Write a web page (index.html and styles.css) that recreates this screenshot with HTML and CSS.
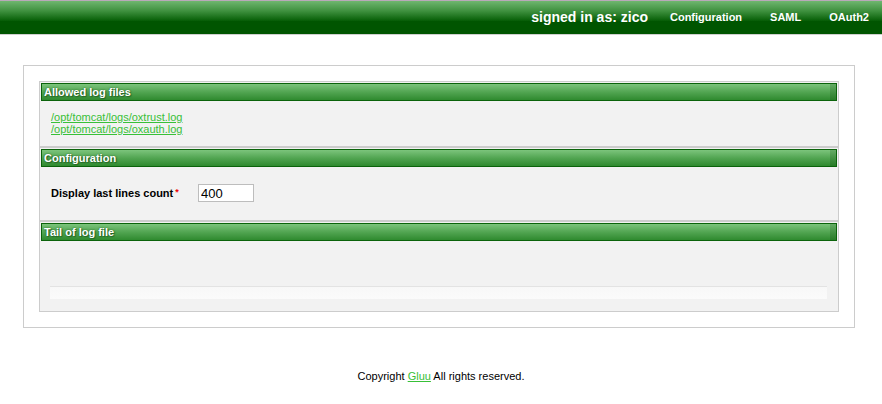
FILE: index.html
```html
<!DOCTYPE html>
<html>
<head>
<meta charset="utf-8">
<title>Log viewer</title>
<link rel="stylesheet" href="styles.css">
</head>
<body>
<header class="topbar">
  <span class="signed">signed in as: zico</span>
  <nav class="menu">
    <a href="#">Configuration</a>
    <a href="#">SAML</a>
    <a href="#">OAuth2</a>
  </nav>
</header>
<main class="outer">
  <div class="panel">
    <section class="section">
      <h2 class="section-head">Allowed log files</h2>
      <div class="section-body files">
        <a href="#">/opt/tomcat/logs/oxtrust.log</a>
        <a href="#">/opt/tomcat/logs/oxauth.log</a>
      </div>
    </section>
    <section class="section sep">
      <h2 class="section-head">Configuration</h2>
      <div class="section-body config">
        <label class="field-label">Display last lines count<span class="req">*</span></label>
        <input class="field-input" type="text" value="400">
      </div>
    </section>
    <section class="section sep">
      <h2 class="section-head">Tail of log file</h2>
      <div class="section-body tail">
        <div class="tail-bar"></div>
      </div>
    </section>
  </div>
</main>
<footer class="footer">Copyright <a href="#">Gluu</a> All rights reserved.</footer>
</body>
</html>
```
FILE: styles.css
```css
html, body {
  margin: 0;
  padding: 0;
  background: #fff;
  font-family: "Liberation Sans", Arial, sans-serif;
  color: #000;
}

.topbar {
  border-top: 1px solid #b9a9b9;
  border-bottom: 1px solid #cfcfcf;
  box-sizing: border-box;
  height: 35px;
  background: linear-gradient(#6fb66f 0%, #3f913f 30%, #0a620a 58%, #005500 62%, #005500 100%);
  display: flex;
  align-items: center;
  justify-content: flex-end;
  padding: 0 13px 1px 0;
  color: #fff;
}
.signed {
  font-size: 14px;
  font-weight: bold;
  margin-right: 22px;
}
.menu {
  display: flex;
  gap: 28px;
}
.menu a {
  color: #fff;
  text-decoration: none;
  font-size: 11px;
  font-weight: bold;
}

.outer {
  margin: 30px 27px 0 23px;
  border: 1px solid #cccccc;
  padding: 15px;
}
.panel {
  border: 1px solid #cccccc;
  background: #f2f2f2;
}
.section {
  padding-top: 1px;
}
.section.sep {
  border-top: 2px solid #cccccc;
}
.section-head {
  margin: 0 1px 0 1px;
  height: 18px;
  box-sizing: border-box;
  border: 1px solid #0b630b;
  background:
    linear-gradient(to right, transparent calc(100% - 6px), rgba(0, 60, 0, 0.18) calc(100% - 6px)),
    linear-gradient(#7cc47c, #52a552 50%, #2f8a2f);
  color: #fff;
  font-size: 11px;
  font-weight: bold;
  line-height: 16px;
  padding-left: 2px;
  text-shadow: 0 0 2px #1e5e1e, 1px 1px 1px #2a6a2a;
}
.section-body {
  font-size: 11px;
}
.files {
  padding: 10px 10px 11px 11px;
  display: flex;
  flex-direction: column;
  align-items: flex-start;
  line-height: 12px;
}
.files a {
  color: #38c038;
}
.config {
  height: 53px;
  display: flex;
  align-items: center;
  padding: 0 0 1px 11px;
  box-sizing: border-box;
}
.field-label {
  width: 147px;
  font-weight: bold;
  font-size: 11px;
}
.req {
  color: #e00;
  margin-left: 2px;
  font-size: 9px;
  vertical-align: top;
}
.field-input {
  width: 56px;
  height: 18px;
  box-sizing: border-box;
  border: 1px solid #bdbdbd;
  background: #fff;
  font-family: "Liberation Sans", Arial, sans-serif;
  font-size: 13px;
  padding: 0 2px;
  margin: 0;
}
.tail {
  height: 70px;
  box-sizing: border-box;
  padding: 45px 11px 0 10px;
}
.tail-bar {
  height: 13px;
  box-sizing: border-box;
  border-top: 1px solid #e3e3e3;
  background: linear-gradient(#f8f8f8, #fbfbfb);
}

.footer {
  text-align: center;
  font-size: 11px;
  margin-top: 42px;
}
.footer a {
  color: #38c038;
}
```
